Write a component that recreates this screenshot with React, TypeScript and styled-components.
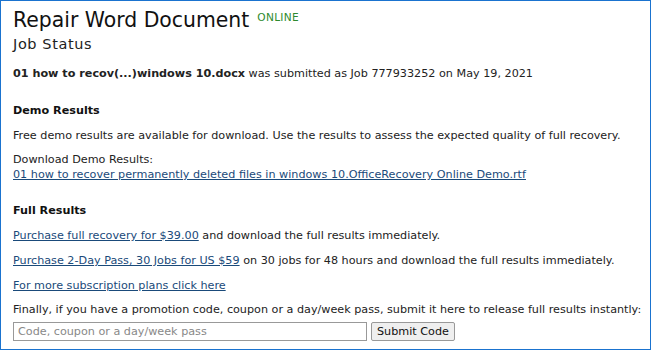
import React from 'react';
import styled, { createGlobalStyle } from 'styled-components';

const GlobalStyle = createGlobalStyle`
  html, body {
    margin: 0;
    padding: 0;
    background: #fff;
  }
  body {
    font-family: 'DejaVu Sans', Verdana, sans-serif;
    color: #222;
  }
`;

const Frame = styled.div`
  width: 651px;
  height: 350px;
  box-sizing: border-box;
  border: 1px solid #1a73cf;
  padding: 0 2px 0 12px;
  overflow: hidden;
`;

const TitleRow = styled.div`
  display: flex;
  align-items: flex-start;
  margin-top: 7px;
`;

const Title = styled.h1`
  margin: 0;
  font-size: 20.4px;
  font-weight: normal;
  color: #111;
  line-height: 24px;
`;

const Badge = styled.span`
  font-size: 10.6px;
  color: #2e8a2e;
  margin-left: 8px;
  margin-top: 3px;
  letter-spacing: 0.3px;
`;

const Subtitle = styled.h2`
  margin: 4px 0 0;
  font-size: 14.5px;
  line-height: 17px;
  font-weight: normal;
  color: #222;
  letter-spacing: 0.6px;
`;

const Text = styled.p<{ $gap?: number }>`
  margin: ${p => p.$gap ?? 10}px 0 0;
  font-size: 11.2px;
  line-height: 15px;
  color: #222;
  white-space: nowrap;
`;

const SectionTitle = styled.h3<{ $gap?: number }>`
  margin: ${p => p.$gap ?? 22}px 0 0;
  font-size: 11.2px;
  line-height: 15px;
  font-weight: bold;
  color: #111;
`;

const Link = styled.a`
  color: #1a4a7a;
  text-decoration: underline;
`;

const CodeForm = styled.form`
  display: flex;
  gap: 4px;
  margin-top: 5px;
`;

const CodeInput = styled.input`
  width: 354px;
  height: 19px;
  box-sizing: border-box;
  border: 1px solid #999;
  padding: 0 4px;
  font-family: 'DejaVu Sans', Verdana, sans-serif;
  font-size: 11.2px;
  color: #222;
  &::placeholder {
    color: #888;
  }
`;

const SubmitButton = styled.button`
  height: 19px;
  box-sizing: border-box;
  padding: 0 5px;
  border: 1px solid #999;
  border-radius: 2px;
  background: #efefef;
  font-family: 'DejaVu Sans', Verdana, sans-serif;
  font-size: 11.2px;
  color: #111;
`;

export default function App() {
  return (
    <>
      <GlobalStyle />
      <Frame>
        <TitleRow>
          <Title>Repair Word Document</Title>
          <Badge>ONLINE</Badge>
        </TitleRow>
        <Subtitle>Job Status</Subtitle>

        <Text $gap={13}>
          <b>01 how to recov(...)windows 10.docx</b> was submitted as Job 777933252 on May 19, 2021
        </Text>

        <SectionTitle>Demo Results</SectionTitle>
        <Text>
          Free demo results are available for download. Use the results to assess the expected quality of full recovery.
        </Text>
        <Text $gap={9}>
          Download Demo Results:
          <br />
          <Link href="#">01 how to recover permanently deleted files in windows 10.OfficeRecovery Online Demo.rtf</Link>
        </Text>

        <SectionTitle $gap={21}>Full Results</SectionTitle>
        <Text>
          <Link href="#">Purchase full recovery for $39.00</Link> and download the full results immediately.
        </Text>
        <Text>
          <Link href="#">Purchase 2-Day Pass, 30 Jobs for US $59</Link> on 30 jobs for 48 hours and download the full results immediately.
        </Text>
        <Text>
          <Link href="#">For more subscription plans click here</Link>
        </Text>
        <Text $gap={9}>
          Finally, if you have a promotion code, coupon or a day/week pass, submit it here to release full results instantly:
        </Text>
        <CodeForm onSubmit={e => e.preventDefault()}>
          <CodeInput placeholder="Code, coupon or a day/week pass" />
          <SubmitButton type="submit">Submit Code</SubmitButton>
        </CodeForm>
      </Frame>
    </>
  );
}
